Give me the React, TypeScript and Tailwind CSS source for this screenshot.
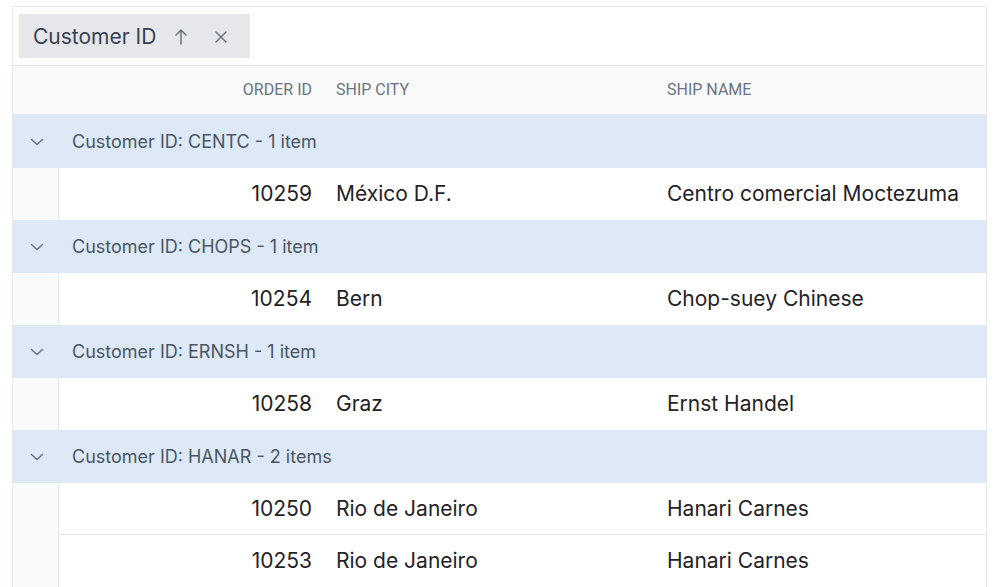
import React from 'react';

type Order = { id: number; city: string; name: string };
type Group = { key: string; orders: Order[] };

const groups: Group[] = [
  { key: 'CENTC', orders: [{ id: 10259, city: 'México D.F.', name: 'Centro comercial Moctezuma' }] },
  { key: 'CHOPS', orders: [{ id: 10254, city: 'Bern', name: 'Chop-suey Chinese' }] },
  { key: 'ERNSH', orders: [{ id: 10258, city: 'Graz', name: 'Ernst Handel' }] },
  {
    key: 'HANAR',
    orders: [
      { id: 10250, city: 'Rio de Janeiro', name: 'Hanari Carnes' },
      { id: 10253, city: 'Rio de Janeiro', name: 'Hanari Carnes' },
    ],
  },
];

const ChevronDown = () => (
  <svg width="16" height="16" viewBox="0 0 16 16" fill="none" stroke="#6b7280" strokeWidth="1.5" strokeLinecap="round" strokeLinejoin="round">
    <path d="M2.5 5.5l5.5 5 5.5-5" />
  </svg>
);

export default function App() {
  return (
    <div className="min-h-[587px] bg-white pl-[12px] pt-[6px]" style={{ fontFamily: 'Inter, "Noto Sans", sans-serif' }}>
      <div className="w-[975px] border-x border-t border-[#e5e7eb] overflow-hidden">
        {/* Group drop area */}
        <div className="h-[59px] flex items-center px-[6px] border-b border-[#e5e7eb]">
          <div className="h-[44px] w-[231px] bg-[#e5e7eb] flex items-center pl-[14px] pt-[2px] text-[21px] text-[#374151]">
            <span>Customer ID</span>
            <svg className="ml-[17px]" width="16" height="18" viewBox="0 0 16 18" fill="none" stroke="#6b7280" strokeWidth="1.5" strokeLinecap="round" strokeLinejoin="round">
              <path d="M8 16V2M3 7l5-5 5 5" />
            </svg>
            <svg className="ml-[25px]" width="14" height="14" viewBox="0 0 14 14" fill="none" stroke="#6b7280" strokeWidth="1.5" strokeLinecap="round">
              <path d="M2 2l10 10M12 2L2 12" />
            </svg>
          </div>
        </div>

        {/* Header */}
        <div
          className="h-[49px] flex items-center bg-[#f9fafb] border-b border-[#e5e7eb] text-[16px] text-[#6b7280] uppercase"
          style={{ fontFamily: 'Roboto, "Liberation Sans", sans-serif' }}
        >
          <div className="w-[46px]" />
          <div className="w-[266px] text-right pr-[13px]">Order ID</div>
          <div className="w-[331px] pl-[11px]">Ship City</div>
          <div className="flex-1 pl-[11px]">Ship Name</div>
        </div>

        {groups.map((g) => (
          <div key={g.key}>
            <div className="h-[53px] flex items-center bg-[#dde9f7] text-[18px] text-[#4b5563]">
              <div className="w-[46px] flex justify-center pl-[2px]">
                <ChevronDown />
              </div>
              <span className="ml-[13px]">
                Customer ID: {g.key} - {g.orders.length} {g.orders.length === 1 ? 'item' : 'items'}
              </span>
            </div>
            {g.orders.map((o, i) => (
              <div key={o.id} className="h-[52px] flex text-[21px] text-[#1f2328]">
                <div className="w-[46px] bg-[#f9fafb] border-r border-[#e5e7eb]" />
                <div className={`flex-1 flex items-center ${i < g.orders.length - 1 ? 'border-b border-[#e5e7eb]' : ''}`}>
                  <div className="w-[265px] text-right pr-[12px]">{o.id}</div>
                  <div className="w-[331px] pl-[12px]">{o.city}</div>
                  <div className="flex-1 pl-[12px]">{o.name}</div>
                </div>
              </div>
            ))}
          </div>
        ))}
      </div>
    </div>
  );
}
